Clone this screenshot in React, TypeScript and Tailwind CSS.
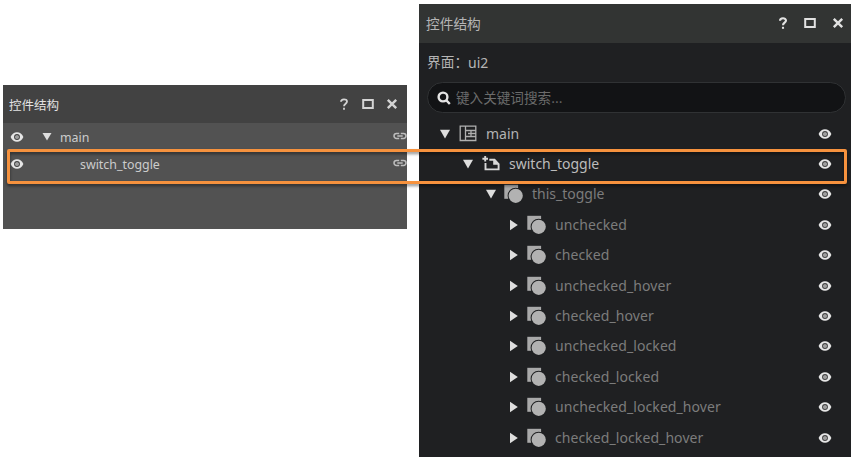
const FONT = "font-['Noto_Sans','Noto_Sans_CJK_SC',sans-serif]";
const CJK = "font-['Noto_Sans_CJK_SC',sans-serif]";

function Eye({ className = "" }: { className?: string }) {
  return (
    <svg viewBox="0 0 14 10" className={`h-[10px] w-[14px] shrink-0 ${className}`}>
      <path d="M.6 5C1.800 1.900 4.200.2 7 .2S12.200 1.900 13.400 5C12.200 8.100 9.800 9.800 7 9.800S1.800 8.100.6 5Z" fill="#e6e6e6" />
      <circle cx="7" cy="5" r="2.400" fill="#bdbdbd" stroke="#444" strokeWidth="1.100" />
      <circle cx="7" cy="5" r=".8" fill="#777" />
    </svg>
  );
}

function Arrow({ open, small }: { open?: boolean; small?: boolean }) {
  return (
    <svg viewBox="0 0 12 12" className="h-3 w-3 shrink-0">
      <path d={small ? "M1.500 2h9L6 9.600z" : open ? "M1 1.800h10L6 10.600z" : "M2 .8v10.400l7.800-5.200z"} fill="#dedede" />
    </svg>
  );
}

function LinkIcon() {
  return (
    <svg viewBox="0 0 14 8" className="h-2 w-[14px] shrink-0" fill="none" stroke="#bdbdbd" strokeWidth="1.500">
      <path d="M6.200 1.500H3.500a2.500 2.500 0 0 0 0 5h2.700M7.800 1.500h2.700a2.500 2.500 0 0 1 0 5H7.800M4.300 4h5.400" />
    </svg>
  );
}

function WindowButtons({ small }: { small?: boolean }) {
  const color = small ? "text-[#d4d4d4]" : "text-[#e2e2e2]";
  return (
    <div className={`flex items-center ${color} ${small ? "gap-[12px] pr-[9.500px]" : "gap-[15.500px] pr-[7.500px] pb-[2px]"}`}>
      <svg viewBox="0 0 12 14" className="h-[14px] w-3" fill="none" stroke="currentColor" strokeWidth={small ? 1.8 : 2.1}>
        <path d="M3 4.800C3 1.500 9 1.500 9 4.600 9 6.700 6 6.700 6 9.200" />
        <path d="M6 10.800v2" />
      </svg>
      <svg viewBox="0 0 12 12" className="h-3 w-3" fill="none" stroke="currentColor" strokeWidth="2">
        <path d="M1.200 2h9.600v8H1.200z" />
      </svg>
      <svg viewBox="0 0 12 12" className="h-3 w-3" fill="none" stroke="currentColor" strokeWidth="2.400">
        <path d="m1.800 1.800 8.400 8.400M10.200 1.800l-8.400 8.400" />
      </svg>
    </div>
  );
}

type Kind = "screen" | "custom" | "group";

function NodeIcon({ kind }: { kind: Kind }) {
  if (kind === "screen")
    return (
      <svg viewBox="0 0 20 20" className="h-5 w-5 shrink-0" fill="none" stroke="#b0b0b0" strokeWidth="1.300">
        <path d="M1.200 2.200h15.600v14.300H1.200zM6.500 2.200v14.300M6.500 6.500h10.300M6.500 12.500h10.300M12 6.500v6M9 9.500h7.800" />
      </svg>
    );
  if (kind === "custom")
    return (
      <svg viewBox="0 0 20 20" className="h-5 w-5 shrink-0" fill="none" stroke="#d8d8d8" strokeWidth="1.900">
        <path d="M3.200 2v5.600M.4 4.800H6" />
        <path d="M3.500 9v6.400h13.100V10.200l-4.100-4.400H7.300" />
        <path d="M11.200 5v5.700h6z" fill="#d8d8d8" stroke="none" />
      </svg>
    );
  return (
    <svg viewBox="0 0 20 20" className="h-5 w-5 shrink-0 overflow-visible">
      <path d="M-.7.8h13.800v14H-.7z" fill="#a9a9a9" />
      <circle cx="10.700" cy="11.800" r="8.100" fill="#1f2022" />
      <circle cx="10.700" cy="11.800" r="7.100" fill="#b2b2b2" />
    </svg>
  );
}

interface TreeNode {
  label: string;
  indent: string;
  kind: Kind;
  open?: boolean;
  color: string;
}

const LEAF = { indent: "pl-[89px]", kind: "group" as Kind, color: "text-[#7c7c7c] tracking-[0.080px]" };

const NODES: TreeNode[] = [
  { label: "main", indent: "pl-5", kind: "screen", open: true, color: "text-[#b2b2b2]" },
  { label: "switch_toggle", indent: "pl-[43px]", kind: "custom", open: true, color: "text-[#bcbcbc]" },
  { label: "this_toggle", indent: "pl-[66px]", kind: "group", open: true, color: "text-[#7c7c7c]" },
  { label: "unchecked", ...LEAF },
  { label: "checked", ...LEAF },
  { label: "unchecked_hover", ...LEAF },
  { label: "checked_hover", ...LEAF },
  { label: "unchecked_locked", ...LEAF },
  { label: "checked_locked", ...LEAF },
  { label: "unchecked_locked_hover", ...LEAF },
  { label: "checked_locked_hover", ...LEAF },
];

function LegacyPanel() {
  return (
    <section className="mt-[81px] h-[144px] w-[404px] shrink-0 bg-[#525252]">
      <header className="flex h-[38px] items-center justify-between bg-[#424242] pl-[6px]">
        <h2 className={`${CJK} pt-[2px] text-[12.500px] leading-none text-[#e2e2e2]`}>控件结构</h2>
        <WindowButtons small />
      </header>
      <div className="flex h-[27px] items-center pl-[7px] text-[12.400px] text-[#cccccc]">
        <Eye />
        <div className="ml-[17px] flex"><Arrow open small /></div>
        <span className="ml-[7px] pt-[3px] leading-none">main</span>
        <div className="ml-auto flex pb-[2px]"><LinkIcon /></div>
      </div>
      <div className="flex h-[27px] items-center pl-[7px] text-[12.400px] text-[#cccccc]">
        <Eye />
        <span className="ml-14 pt-[3px] leading-none">switch_toggle</span>
        <div className="ml-auto flex pb-[2px]"><LinkIcon /></div>
      </div>
    </section>
  );
}

function StructurePanel() {
  return (
    <section className="h-[453px] w-[432px] shrink-0 bg-[#1f2022]">
      <header className="flex h-[39px] items-center justify-between bg-[#323433] pl-[7px]">
        <h2 className={`${CJK} text-[13.700px] leading-none text-[#b5b5b5]`}>控件结构</h2>
        <WindowButtons />
      </header>
      <div className="flex h-[39px] items-center pl-2 text-[14px] text-[#b5b5b5]">
        <span className={`${CJK} pb-px text-[13.700px] leading-none`}>界面：</span>
        <span className="leading-none">ui2</span>
      </div>
      <div className="ml-2 flex h-[31px] w-[419px] items-center rounded-full border border-[#303234] bg-[#121315] pl-[9px]">
        <svg viewBox="0 0 14 14" className="h-[14px] w-[14px]" fill="none" stroke="#e4e4e4" strokeWidth="2.400">
          <circle cx="6" cy="6" r="4.400" />
          <path d="m9.200 9.200 3.600 3.800" />
        </svg>
        <span className={`${CJK} ml-[5px] text-[13.600px] leading-none text-[#6b6b6b]`}>键入关键词搜索...</span>
      </div>
      <div className="pt-[5.500px]">
        {NODES.map((n) => (
          <div key={n.label} className={`flex h-[30.400px] items-center ${n.indent}`}>
            <Arrow open={n.open} />
            <div className="ml-2 flex"><NodeIcon kind={n.kind} /></div>
            <span className={`ml-[7px] text-[14px] leading-none ${n.color}`}>{n.label}</span>
            <Eye className="mr-[19px] ml-auto" />
          </div>
        ))}
      </div>
    </section>
  );
}

export default function App() {
  return (
    <main className={`relative flex h-[458px] w-[852px] items-start gap-3 overflow-hidden bg-white pt-1 pl-[3px] ${FONT}`}>
      <LegacyPanel />
      <StructurePanel />
      <div className="absolute top-[149px] left-[7px] h-[35px] w-[840px] rounded-[2px] border-[3px] border-[#f6923e] drop-shadow-[0_2px_1.500px_rgba(0,0,0,0.45)]" />
    </main>
  );
}
